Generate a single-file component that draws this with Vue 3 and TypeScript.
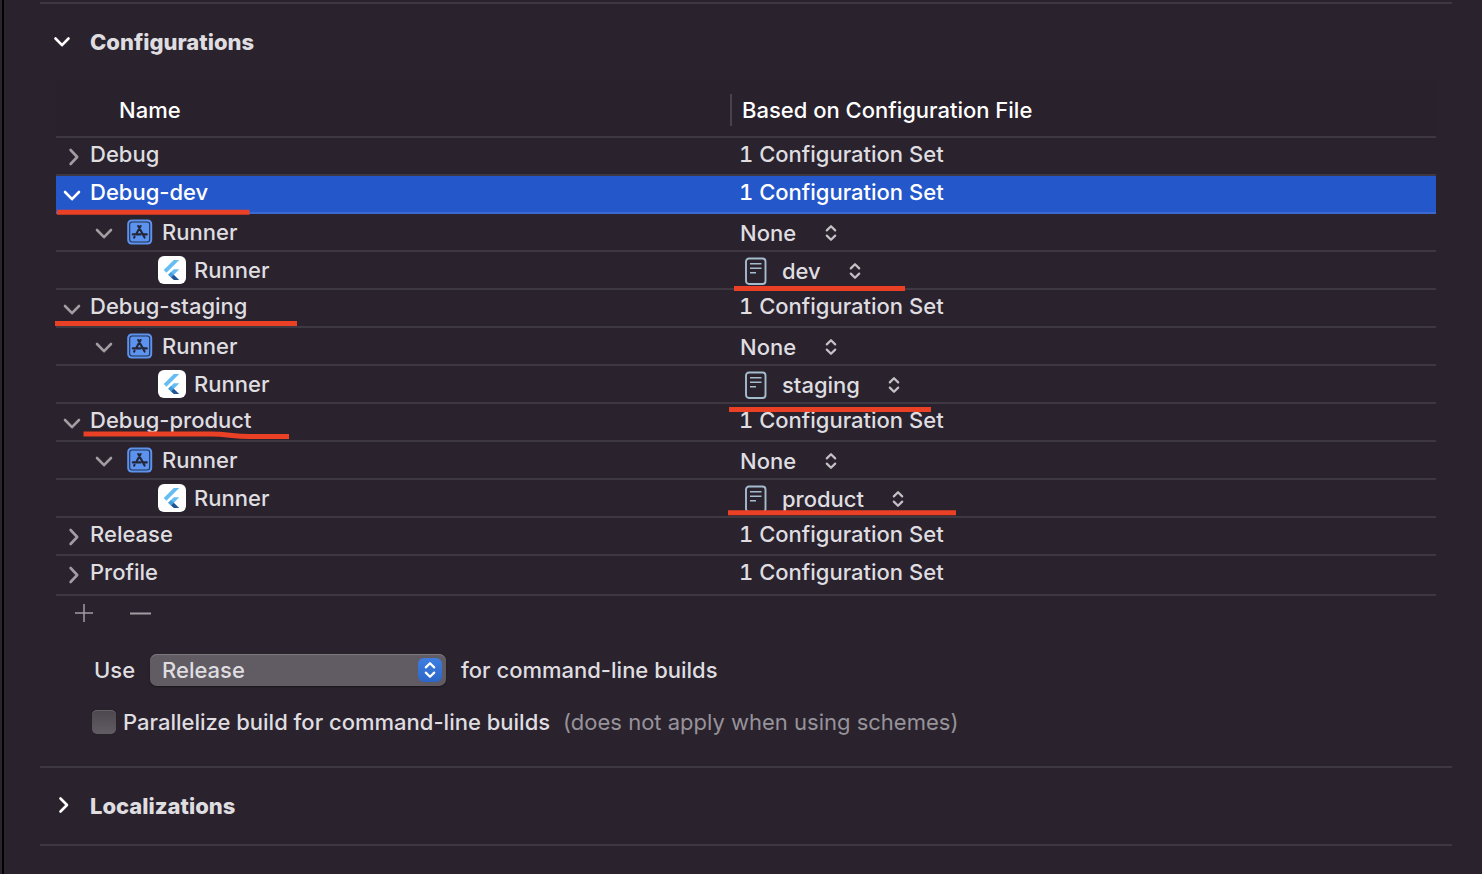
<script setup lang="ts">
import { ref } from 'vue'

type Kind = 'set' | 'project' | 'target'

interface Row {
  id: string
  kind: Kind
  name: string
  open?: boolean
  file: string
  selected?: boolean
}

const rows: Row[] = [
  { id: 'debug', kind: 'set', name: 'Debug', open: false, file: '1 Configuration Set' },
  { id: 'dev', kind: 'set', name: 'Debug-dev', open: true, file: '1 Configuration Set', selected: true },
  { id: 'dev-project', kind: 'project', name: 'Runner', open: true, file: 'None' },
  { id: 'dev-target', kind: 'target', name: 'Runner', file: 'dev' },
  { id: 'staging', kind: 'set', name: 'Debug-staging', open: true, file: '1 Configuration Set' },
  { id: 'staging-project', kind: 'project', name: 'Runner', open: true, file: 'None' },
  { id: 'staging-target', kind: 'target', name: 'Runner', file: 'staging' },
  { id: 'product', kind: 'set', name: 'Debug-product', open: true, file: '1 Configuration Set' },
  { id: 'product-project', kind: 'project', name: 'Runner', open: true, file: 'None' },
  { id: 'product-target', kind: 'target', name: 'Runner', file: 'product' },
  { id: 'release', kind: 'set', name: 'Release', open: false, file: '1 Configuration Set' },
  { id: 'profile', kind: 'set', name: 'Profile', open: false, file: '1 Configuration Set' },
]

const parallelize = ref(false)
</script>

<template>
  <main class="pane">
    <section class="section">
      <h2 class="section-head">
        <button class="fold" type="button" aria-label="Collapse Configurations">
          <svg width="20" height="20" viewBox="0 0 20 20"><path class="chevron" d="M3.5 6.5 10 13.2 16.5 6.5" /></svg>
        </button>
        Configurations
      </h2>

      <div class="table-wrap">
        <table class="configs">
          <colgroup>
            <col class="col-name" />
            <col />
          </colgroup>
          <thead>
            <tr>
              <th scope="col"><div class="head-name">Name</div></th>
              <th scope="col"><div class="head-file">Based on Configuration File</div></th>
            </tr>
          </thead>
          <tbody>
            <tr v-for="row in rows" :key="row.id" :class="{ selected: row.selected }">
              <td>
                <div class="cell" :class="row.kind">
                  <button v-if="row.kind !== 'target'" class="disclosure" type="button" :aria-expanded="row.open" :aria-label="row.name">
                    <svg width="20" height="20" viewBox="0 0 20 20">
                      <path v-if="row.open" class="chevron" d="M3 8 10 15.2 17 8" />
                      <path v-else class="chevron" d="M8.6 4 15.2 11 8.6 18" />
                    </svg>
                  </button>
                  <svg v-if="row.kind === 'project'" class="project-icon" width="26" height="26" viewBox="0 0 26 26">
                    <rect x="0.2" y="0.5" width="25" height="25" rx="4.5" fill="#5b93ee" />
                    <rect x="2.7" y="3" width="20" height="20" rx="2.5" fill="none" stroke="#25304f" stroke-width="1.1" />
                    <path d="M11.2 7 17.6 18.6M13.6 7 9 15.4M5.8 15.4H13.6M16.6 15.4H19.8M7.6 17.8 7.1 18.6" fill="none" stroke="#252738" stroke-width="2.1" stroke-linecap="round" />
                  </svg>
                  <svg v-if="row.kind === 'target'" class="target-icon" width="28" height="28" viewBox="0 0 28 28">
                    <rect width="28" height="28" rx="6" fill="#fff" />
                    <path d="M15.8 4H21.2L8.4 16.8 5.7 14.1Z" fill="#65bdf3" />
                    <path d="M15.8 13.3H21.2L16.4 18.3 13 21.4 10.2 18.8Z" fill="#65bdf3" />
                    <path d="M10.2 18.8 13 16 15.8 18.8 13 21.5Z" fill="#459ddb" />
                    <path d="M13 21.5 15.8 18.8 21.2 24H15.8Z" fill="#205493" />
                  </svg>
                  <span>{{ row.name }}</span>
                </div>
              </td>
              <td>
                <div v-if="row.kind === 'set'" class="cell set-file">{{ row.file }}</div>
                <div v-else class="cell picker" :class="{ 'with-file': row.kind === 'target' }">
                  <svg v-if="row.kind === 'target'" class="file-icon" width="22" height="28" viewBox="0 0 22 28">
                    <rect x="1" y="1.5" width="19.5" height="25.5" rx="3" fill="none" stroke="#a5bccf" stroke-width="1.9" />
                    <path d="M5 6.8H16.5M5 11.3H16.5M5 15.7H11" stroke="#a5bccf" stroke-width="1.6" />
                  </svg>
                  <select :aria-label="`Configuration file for ${row.id}`">
                    <option>{{ row.file }}</option>
                  </select>
                  <svg class="updown" width="12" height="18" viewBox="0 0 12 18">
                    <path d="M1.8 6.4 6 2.2 10.2 6.4M1.8 11.6 6 15.8 10.2 11.6" />
                  </svg>
                </div>
              </td>
            </tr>
          </tbody>
        </table>

        <svg class="marks" width="920" height="516" viewBox="0 0 920 516" aria-hidden="true">
          <path d="M1 132.3H193.5M678 208.5H849M-1 243.5H241M673 329.5H875M672 432.7H900" />
          <path d="M27.5 354H155C172 354 176 356.5 194 356.5H233" />
        </svg>
      </div>

      <div class="edit-buttons">
        <button type="button" aria-label="Add configuration">
          <svg width="24" height="24" viewBox="0 0 24 24"><path d="M3 12H21M12 3V21" stroke-width="1.5" /></svg>
        </button>
        <button type="button" aria-label="Remove configuration">
          <svg width="24" height="24" viewBox="0 0 24 24"><path d="M2 12.5H23" stroke-width="2" /></svg>
        </button>
      </div>

      <div class="use-row">
        <label for="cli-config">Use</label>
        <span class="popup">
          <select id="cli-config">
            <option>Release</option>
          </select>
          <span class="popup-cap">
            <svg class="updown" width="12" height="18" viewBox="0 0 12 18">
              <path d="M1.8 6.4 6 2.2 10.2 6.4M1.8 11.6 6 15.8 10.2 11.6" />
            </svg>
          </span>
        </span>
        <span>for command-line builds</span>
      </div>

      <div class="check-row">
        <input id="parallelize" v-model="parallelize" type="checkbox" />
        <label for="parallelize">Parallelize build for command-line builds</label>
        <span class="hint">(does not apply when using schemes)</span>
      </div>
    </section>

    <section class="section closed">
      <h2 class="section-head">
        <button class="fold" type="button" aria-label="Expand Localizations">
          <svg width="20" height="20" viewBox="0 0 20 20"><path class="chevron" d="M8.5 2.5 15 9 8.5 15.5" /></svg>
        </button>
        Localizations
      </h2>
    </section>
  </main>
</template>

<style>
body {
  margin: 0;
  background: #2a232d;
}
</style>

<style scoped>
.pane {
  box-sizing: border-box;
  min-height: 100vh;
  margin-left: 2px;
  padding: 2px 30px 0 36px;
  border-left: 2px solid #000;
  background: #2a232d;
  color: #dfdde0;
  font: 500 22px/28px Inter, "Liberation Sans", sans-serif;
}

button,
select {
  margin: 0;
  padding: 0;
  border: 0;
  background: none;
  color: inherit;
  font: inherit;
  appearance: none;
}

button,
svg {
  display: block;
  flex: none;
}

.section {
  border-top: 2px solid #3e3842;
}

.section.closed {
  border-bottom: 2px solid #3e3842;
}

.section-head {
  display: flex;
  align-items: center;
  gap: 18px;
  height: 76px;
  margin: 0;
  padding-left: 12px;
  font-size: 22px;
  font-weight: 800;
}

.fold {
  color: #fff;
}

.chevron {
  fill: none;
  stroke: currentColor;
  stroke-width: 2.6;
  stroke-linecap: round;
  stroke-linejoin: round;
}

.table-wrap {
  position: relative;
  margin: 0 16px;
}

.configs {
  width: 100%;
  table-layout: fixed;
  border-collapse: separate;
  border-spacing: 0;
}

.col-name {
  width: 674px;
}

th,
td {
  padding: 0;
  border-bottom: 2px solid #3e3842;
  text-align: left;
}

th {
  padding: 14px 0 10px;
  background: #29212b;
  color: #fff;
  font-weight: 500;
}

.head-name,
.head-file {
  line-height: 32px;
}

.head-name {
  padding-left: 63px;
}

.head-file {
  padding-left: 10px;
  border-left: 2px solid #48424c;
}

.cell {
  box-sizing: border-box;
  display: flex;
  align-items: center;
  height: 36px;
}

tbody tr:last-child .cell {
  height: 38px;
  padding-bottom: 6px;
}

.set {
  gap: 8px;
  padding: 0 0 4px 6px;
}

.set .disclosure {
  padding-top: 3px;
}

.project {
  padding-left: 38px;
}

.project-icon {
  margin: 0 9px 0 13px;
}

.target {
  gap: 8px;
  padding-left: 102px;
}

.set-file {
  padding: 0 0 4px 9px;
  font-variant-numeric: tabular-nums;
}

.picker {
  gap: 28px;
  padding: 2px 0 0 10px;
}

.with-file {
  padding-left: 15px;
}

.file-icon {
  margin-right: -13px;
}

.disclosure {
  color: #a19da3;
}

.selected td {
  background: #2457ca;
  border-bottom-color: #3b69cf;
  color: #fff;
}

.selected .disclosure {
  color: #fff;
}

.updown path {
  fill: none;
  stroke: currentColor;
  stroke-width: 2.2;
  stroke-linecap: round;
  stroke-linejoin: round;
}

.picker .updown {
  color: #c4c1c6;
}

.marks {
  position: absolute;
  top: 0;
  left: 0;
  overflow: visible;
  pointer-events: none;
}

.marks path {
  fill: none;
  stroke: #ea4025;
  stroke-width: 5;
}

.edit-buttons {
  display: flex;
  gap: 32px;
  padding: 5px 0 0 32px;
}

.edit-buttons path {
  stroke: #a19da3;
}

.use-row {
  display: flex;
  align-items: center;
  gap: 15px;
  margin-top: 29px;
  padding-left: 54px;
}

.popup {
  position: relative;
  display: block;
}

.popup select {
  display: block;
  width: 296px;
  height: 32px;
  padding-left: 12px;
  border-radius: 7px;
  background: #615c63;
  box-shadow: inset 0 1px #7b777d, 0 1px 2px #1b161d;
}

.popup-cap {
  position: absolute;
  top: 4px;
  right: 4px;
  display: flex;
  align-items: center;
  justify-content: center;
  width: 24px;
  height: 24px;
  border-radius: 6px;
  background: linear-gradient(#3d7ee0, #2c67c8);
  color: #fff;
  pointer-events: none;
}

.check-row {
  display: flex;
  align-items: center;
  padding: 22px 0 30px 52px;
}

.check-row input {
  width: 24px;
  height: 24px;
  margin: 0 7px 0 0;
  border-radius: 5px;
  background: linear-gradient(#4c474f, #625d64);
  box-shadow: inset 0 1px #67626a, 0 0 1px #1b161d;
  appearance: none;
}

.check-row input:checked {
  background: #2f6fdb;
}

.hint {
  margin-left: 13px;
  color: #97939a;
  font-weight: 400;
}
</style>
